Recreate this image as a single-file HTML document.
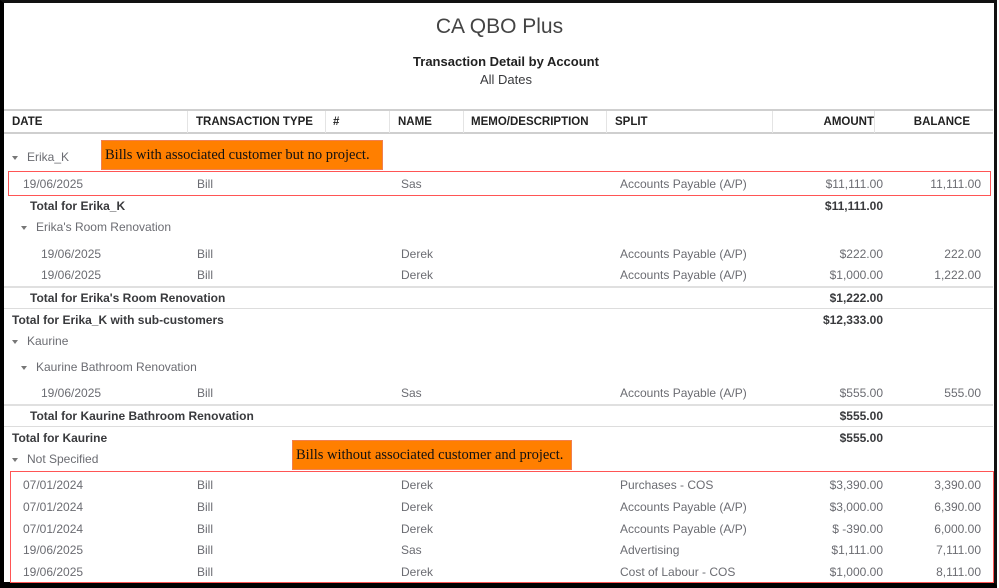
<!DOCTYPE html>
<html><head><meta charset="utf-8"><style>
*{margin:0;padding:0;box-sizing:border-box}
body{width:999px;height:588px;background:#fff;position:relative;overflow:hidden;font-family:"Liberation Sans",sans-serif;font-size:12px;color:#6b6c72}
.a{position:absolute;white-space:nowrap;line-height:14px}
.r{text-align:right}
.b{font-weight:bold;color:#393a3d}
.h{font-weight:bold;color:#222;font-size:11.5px}
.l{position:absolute;height:2px;background:#e0e0e0}
.tri{position:absolute;width:0;height:0;border-left:3.5px solid transparent;border-right:3.5px solid transparent;border-top:4px solid #777}
.or{position:absolute;background:#ff7f00;border:1px solid #f08050;font-family:"Liberation Serif",serif;font-size:14.5px;color:#111;padding:0 0 0 3px;line-height:28px;white-space:nowrap;overflow:hidden}
.rb{position:absolute;border:1.5px solid #f55}
.vs{position:absolute;top:111px;height:22px;width:1px;background:#e4e4e4}
</style></head><body>
<div style="position:absolute;left:0;top:0;width:999px;height:588px;border-left:4px solid #000;border-top:3px solid #111;border-right:5px solid #111;border-bottom:6px solid #000"></div>
<div style="position:absolute;left:997px;top:0;width:2px;height:588px;background:#fff"></div>
<div class="a" style="left:0;width:999px;text-align:center;top:15px;font-size:21px;line-height:24px;color:#444">CA QBO Plus</div>
<div class="a b" style="left:0;width:1012px;text-align:center;top:55px;font-size:13px;color:#222">Transaction Detail by Account</div>
<div class="a" style="left:0;width:1012px;text-align:center;top:73px;font-size:13px;color:#393a3d">All Dates</div>
<div class="l" style="left:4px;width:989px;top:109px;background:#cfcfcf"></div>
<div class="l" style="left:4px;width:989px;top:132px;background:#cfcfcf"></div>
<div class="vs" style="left:187px"></div><div class="vs" style="left:325px"></div><div class="vs" style="left:389px"></div><div class="vs" style="left:463px"></div><div class="vs" style="left:606px"></div><div class="vs" style="left:772px"></div><div class="vs" style="left:874px"></div>
<div class="a h" style="left:12px;top:115px">DATE</div>
<div class="a h" style="left:196px;top:115px">TRANSACTION TYPE</div>
<div class="a h" style="left:333px;top:115px">#</div>
<div class="a h" style="left:398px;top:115px">NAME</div>
<div class="a h" style="left:471px;top:115px">MEMO/DESCRIPTION</div>
<div class="a h" style="left:615px;top:115px">SPLIT</div>
<div class="a h r" style="left:774px;width:100px;top:115px">AMOUNT</div>
<div class="a h r" style="left:870px;width:100px;top:115px">BALANCE</div>

<div class="tri" style="left:12px;top:156px"></div><div class="a" style="left:27px;top:150px">Erika_K</div>
<div class="a" style="left:23px;top:177px">19/06/2025</div><div class="a" style="left:197px;top:177px">Bill</div><div class="a" style="left:401px;top:177px">Sas</div><div class="a" style="left:620px;top:177px">Accounts Payable (A/P)</div><div class="a r" style="left:783px;width:100px;top:177px">$11,111.00</div><div class="a r" style="left:881px;width:100px;top:177px">11,111.00</div>
<div class="a b" style="left:30px;top:199px">Total for Erika_K</div><div class="a b r" style="left:783px;width:100px;top:199px">$11,111.00</div>
<div class="tri" style="left:21px;top:226px"></div><div class="a" style="left:36px;top:220px">Erika's Room Renovation</div>
<div class="a" style="left:41px;top:247px">19/06/2025</div><div class="a" style="left:197px;top:247px">Bill</div><div class="a" style="left:401px;top:247px">Derek</div><div class="a" style="left:620px;top:247px">Accounts Payable (A/P)</div><div class="a r" style="left:783px;width:100px;top:247px">$222.00</div><div class="a r" style="left:881px;width:100px;top:247px">222.00</div>
<div class="a" style="left:41px;top:268px">19/06/2025</div><div class="a" style="left:197px;top:268px">Bill</div><div class="a" style="left:401px;top:268px">Derek</div><div class="a" style="left:620px;top:268px">Accounts Payable (A/P)</div><div class="a r" style="left:783px;width:100px;top:268px">$1,000.00</div><div class="a r" style="left:881px;width:100px;top:268px">1,222.00</div>
<div class="l" style="left:4px;width:989px;top:286px"></div>
<div class="a b" style="left:30px;top:291px">Total for Erika's Room Renovation</div><div class="a b r" style="left:783px;width:100px;top:291px">$1,222.00</div>
<div class="l" style="left:4px;width:989px;top:308px;height:1px;background:#ddd"></div>
<div class="a b" style="left:12px;top:313px">Total for Erika_K with sub-customers</div><div class="a b r" style="left:783px;width:100px;top:313px">$12,333.00</div>
<div class="tri" style="left:12px;top:340px"></div><div class="a" style="left:27px;top:334px">Kaurine</div>
<div class="tri" style="left:21px;top:366px"></div><div class="a" style="left:36px;top:360px">Kaurine Bathroom Renovation</div>
<div class="a" style="left:41px;top:386px">19/06/2025</div><div class="a" style="left:197px;top:386px">Bill</div><div class="a" style="left:401px;top:386px">Sas</div><div class="a" style="left:620px;top:386px">Accounts Payable (A/P)</div><div class="a r" style="left:783px;width:100px;top:386px">$555.00</div><div class="a r" style="left:881px;width:100px;top:386px">555.00</div>
<div class="l" style="left:4px;width:989px;top:404px"></div>
<div class="a b" style="left:30px;top:409px">Total for Kaurine Bathroom Renovation</div><div class="a b r" style="left:783px;width:100px;top:409px">$555.00</div>
<div class="l" style="left:4px;width:989px;top:426px;height:1px;background:#ddd"></div>
<div class="a b" style="left:12px;top:431px">Total for Kaurine</div><div class="a b r" style="left:783px;width:100px;top:431px">$555.00</div>
<div class="tri" style="left:12px;top:458px"></div><div class="a" style="left:27px;top:452px">Not Specified</div>
<div class="a" style="left:23px;top:478px">07/01/2024</div><div class="a" style="left:197px;top:478px">Bill</div><div class="a" style="left:401px;top:478px">Derek</div><div class="a" style="left:620px;top:478px">Purchases - COS</div><div class="a r" style="left:783px;width:100px;top:478px">$3,390.00</div><div class="a r" style="left:881px;width:100px;top:478px">3,390.00</div>
<div class="a" style="left:23px;top:500px">07/01/2024</div><div class="a" style="left:197px;top:500px">Bill</div><div class="a" style="left:401px;top:500px">Derek</div><div class="a" style="left:620px;top:500px">Accounts Payable (A/P)</div><div class="a r" style="left:783px;width:100px;top:500px">$3,000.00</div><div class="a r" style="left:881px;width:100px;top:500px">6,390.00</div>
<div class="a" style="left:23px;top:522px">07/01/2024</div><div class="a" style="left:197px;top:522px">Bill</div><div class="a" style="left:401px;top:522px">Derek</div><div class="a" style="left:620px;top:522px">Accounts Payable (A/P)</div><div class="a r" style="left:783px;width:100px;top:522px">$ -390.00</div><div class="a r" style="left:881px;width:100px;top:522px">6,000.00</div>
<div class="a" style="left:23px;top:543px">19/06/2025</div><div class="a" style="left:197px;top:543px">Bill</div><div class="a" style="left:401px;top:543px">Sas</div><div class="a" style="left:620px;top:543px">Advertising</div><div class="a r" style="left:783px;width:100px;top:543px">$1,111.00</div><div class="a r" style="left:881px;width:100px;top:543px">7,111.00</div>
<div class="a" style="left:23px;top:565px">19/06/2025</div><div class="a" style="left:197px;top:565px">Bill</div><div class="a" style="left:401px;top:565px">Derek</div><div class="a" style="left:620px;top:565px">Cost of Labour - COS</div><div class="a r" style="left:783px;width:100px;top:565px">$1,000.00</div><div class="a r" style="left:881px;width:100px;top:565px">8,111.00</div>

<div class="rb" style="left:8px;top:171px;width:983px;height:25px"></div>
<div class="rb" style="left:10px;top:471px;width:984px;height:112px"></div>
<div class="or" style="left:101px;top:140px;width:282px;height:30px">Bills with associated customer but no project.</div>
<div class="or" style="left:292px;top:440px;width:280px;height:30px">Bills without associated customer and project.</div>
</body></html>
